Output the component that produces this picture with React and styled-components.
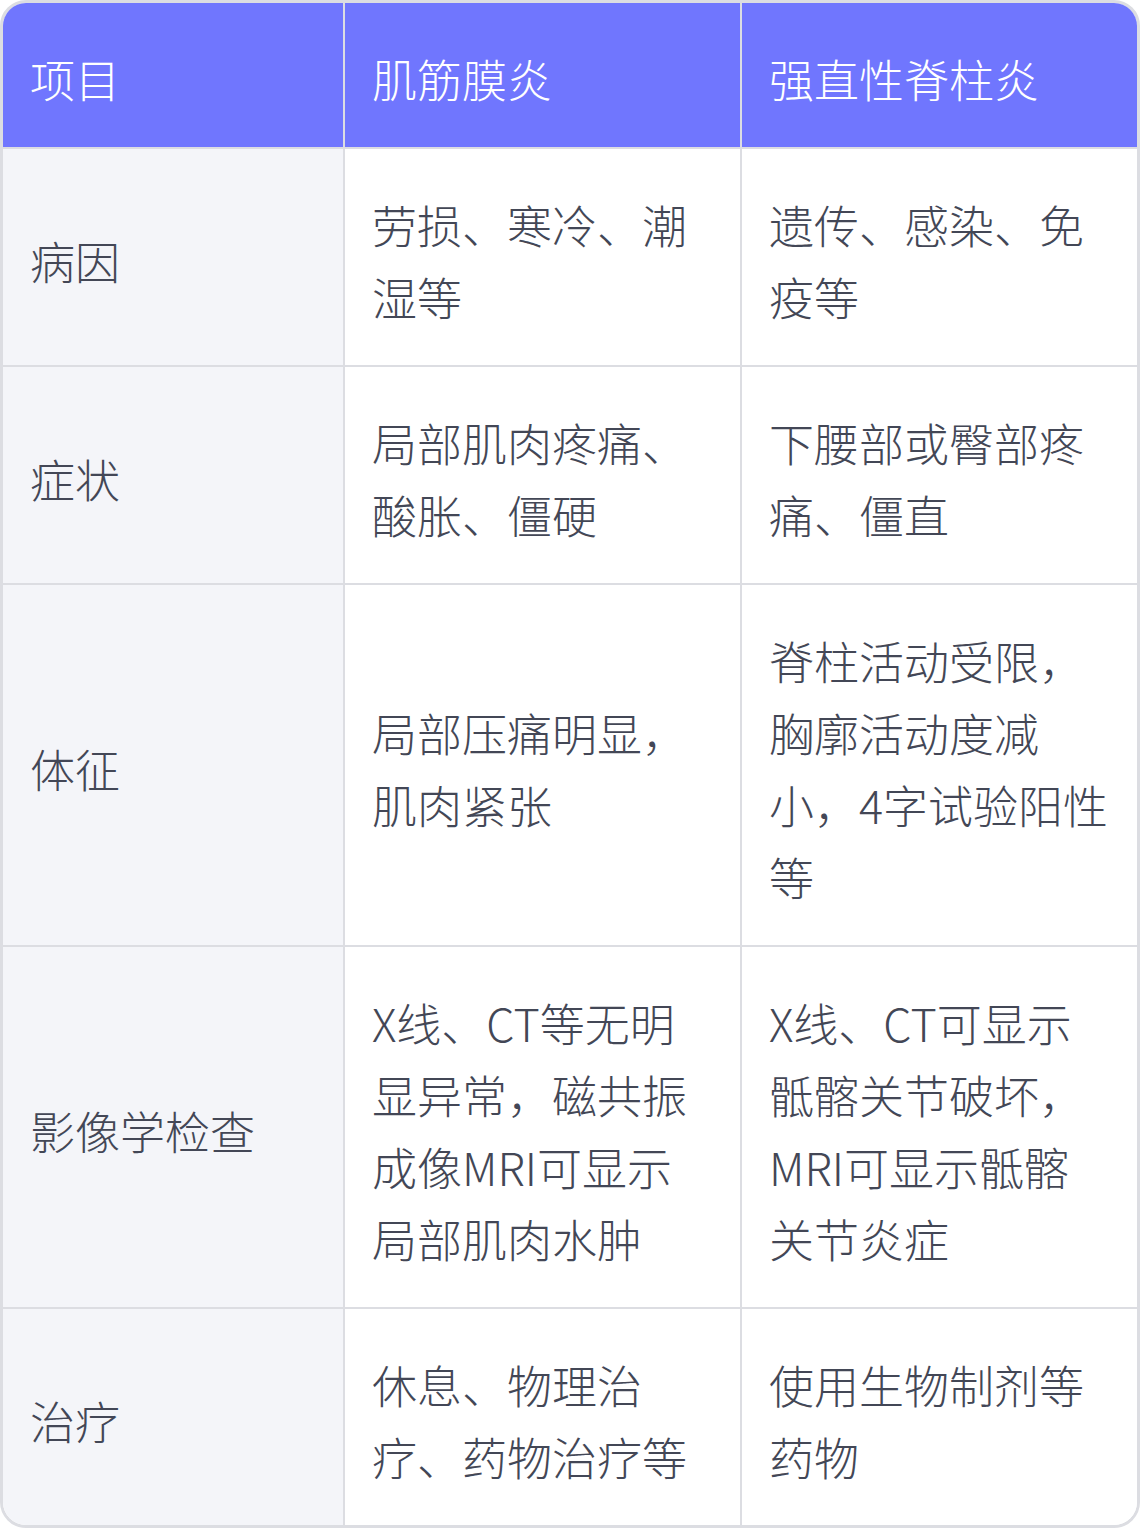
import React from 'react';
import styled, { createGlobalStyle } from 'styled-components';

const GlobalStyle = createGlobalStyle`
  html, body {
    margin: 0;
    padding: 0;
    background: #ffffff;
  }
  body {
    font-family: "Noto Sans CJK SC", "Noto Sans", sans-serif;
  }
`;

const headers = ['项目', '肌筋膜炎', '强直性脊柱炎'];

const rows = [
  ['病因', '劳损、寒冷、潮湿等', '遗传、感染、免疫等'],
  ['症状', '局部肌肉疼痛、酸胀、僵硬', '下腰部或臀部疼痛、僵直'],
  ['体征', '局部压痛明显，肌肉紧张', '脊柱活动受限，胸廓活动度减小，4字试验阳性等'],
  ['影像学检查', 'X线、CT等无明显异常，磁共振成像MRI可显示局部肌肉水肿', 'X线、CT可显示骶髂关节破坏，MRI可显示骶髂关节炎症'],
  ['治疗', '休息、物理治疗、药物治疗等', '使用生物制剂等药物'],
];

const Frame = styled.div`
  width: 1140px;
  box-sizing: border-box;
  border: 3px solid #dcdde2;
  border-radius: 26px;
  overflow: hidden;
`;

const Table = styled.table`
  width: 100%;
  border-collapse: separate;
  border-spacing: 0;
  table-layout: fixed;
`;

const Col = styled.col`
  width: ${p => p.$w}px;
`;

const Th = styled.th`
  background: #7076fe;
  color: #ffffff;
  text-align: left;
  font-weight: 300;
  font-size: 45px;
  line-height: 72px;
  padding: 40px 26px 32px 27px;
  border-bottom: 2px solid #dcdde2;
  border-right: 2px solid #dcdde2;
  &:last-child {
    border-right: none;
  }
`;

const Td = styled.td`
  background: ${p => (p.$label ? '#f4f5f9' : '#ffffff')};
  color: #434756;
  font-weight: 300;
  font-size: 45px;
  line-height: 72px;
  padding: 40px 26px 32px 27px;
  vertical-align: middle;
  word-break: break-all;
  border-right: 2px solid #dcdde2;
  border-bottom: 2px solid #dcdde2;
  &:last-child {
    border-right: none;
  }
  tr:last-child > & {
    border-bottom: none;
  }
`;

export default function App() {
  return (
    <>
      <GlobalStyle />
      <Frame>
        <Table>
          <colgroup>
            <Col $w={342} />
            <Col $w={397} />
            <Col $w={395} />
          </colgroup>
          <thead>
            <tr>
              {headers.map(h => (
                <Th key={h}>{h}</Th>
              ))}
            </tr>
          </thead>
          <tbody>
            {rows.map(r => (
              <tr key={r[0]}>
                <Td $label>{r[0]}</Td>
                <Td>{r[1]}</Td>
                <Td>{r[2]}</Td>
              </tr>
            ))}
          </tbody>
        </Table>
      </Frame>
    </>
  );
}
